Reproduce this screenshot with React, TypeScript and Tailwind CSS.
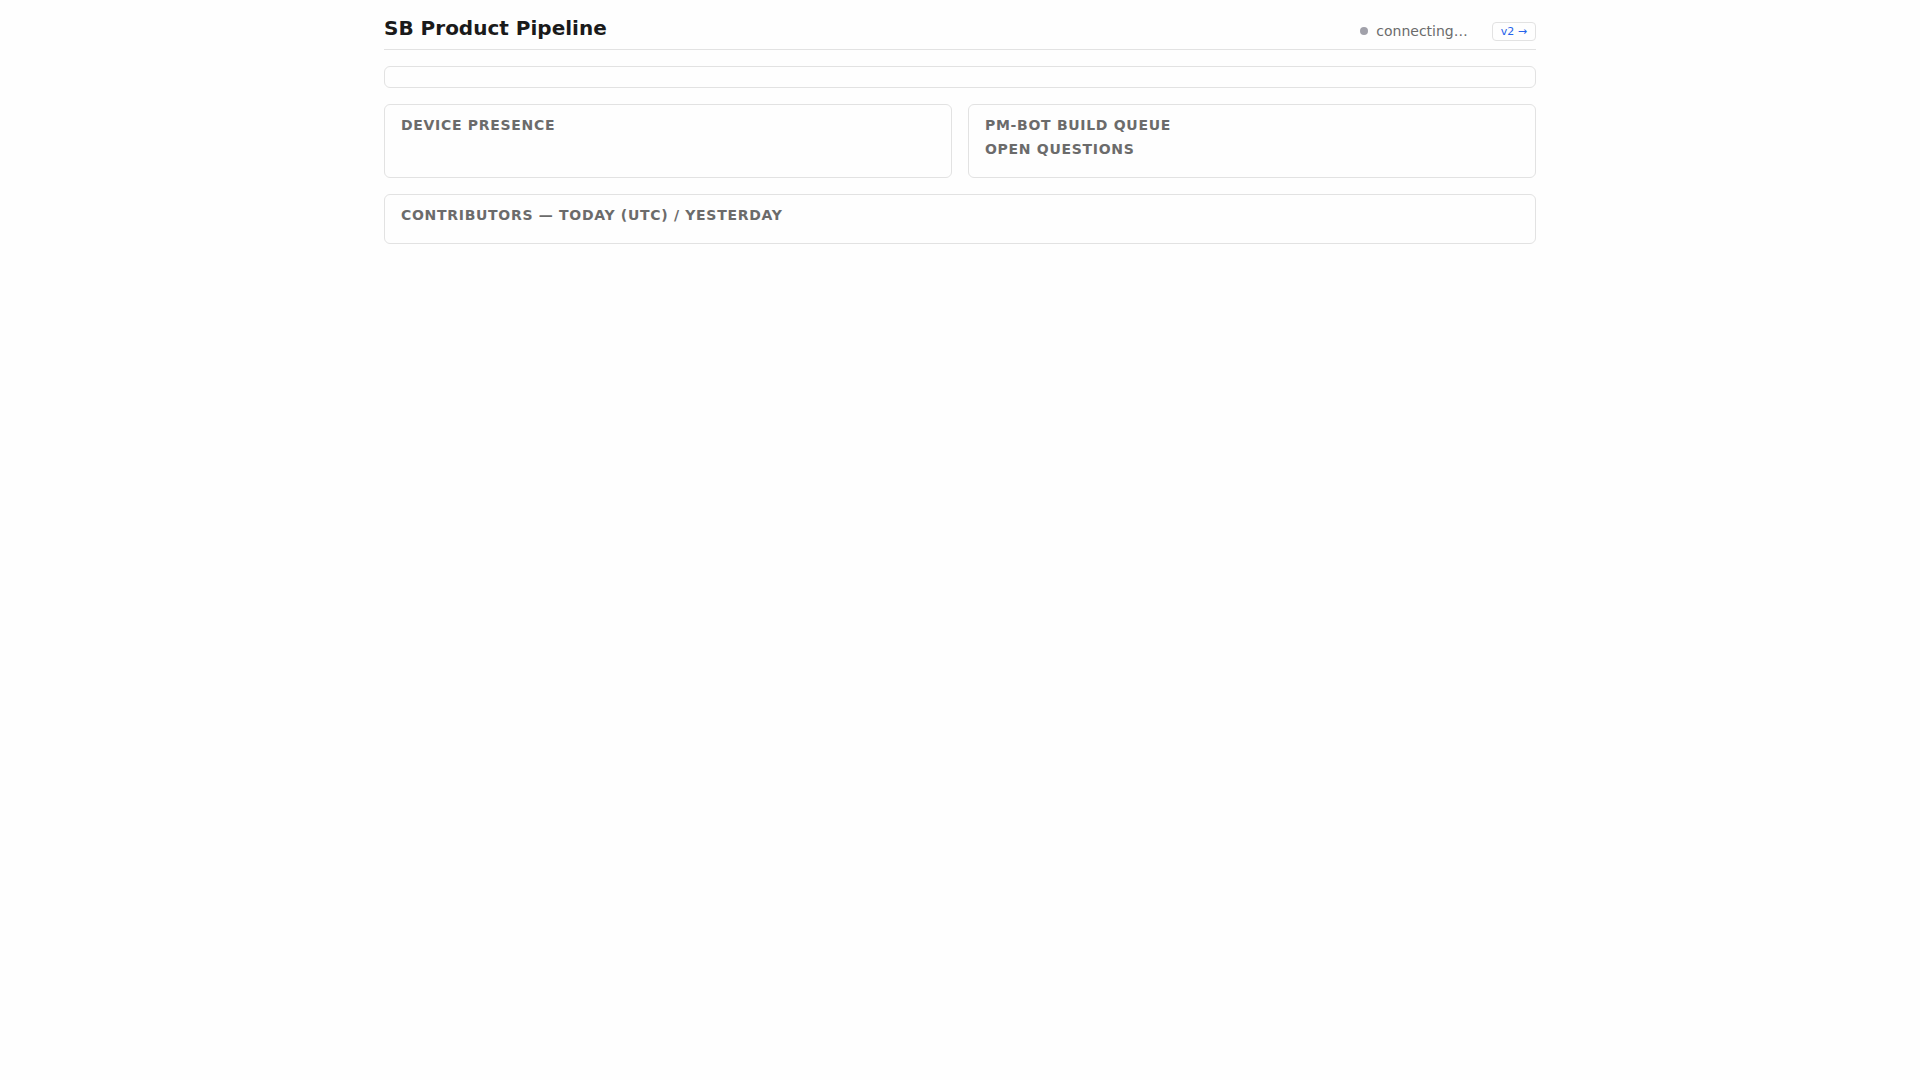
import React from "react";

const HEADING =
  "mb-2 text-[14px] leading-4 font-semibold uppercase tracking-[0.05em] text-[#6b6b6b]";

const CARD = "rounded-md border border-[#e2e2e2] px-4 py-3";

function Header() {
  return (
    <header className="flex items-end justify-between border-b border-[#e2e2e2] pb-2">
      <h1 className="text-[20px] leading-[26px] font-semibold">SB Product Pipeline</h1>
      <div className="flex items-start gap-6">
        <div className="flex items-center gap-2 text-[14px] leading-[18px] text-[#6b6b6b]">
          <span className="h-2 w-2 rounded-full bg-[#a1a1aa]" />
          <span>connecting…</span>
        </div>
        <a
          href="#v2"
          className="rounded-sm border border-[#e2e2e2] px-2 text-[11px] leading-[17px] text-[#2563eb]"
        >
          v2 →
        </a>
      </div>
    </header>
  );
}

export default function App() {
  return (
    <div className="min-h-screen bg-[#fefefe] font-['DejaVu_Sans',sans-serif] text-[#1a1a1a]">
      <main className="mx-auto flex max-w-[1200px] flex-col gap-4 px-6 pt-[15px]">
        <Header />

        {/* === Summary strip === */}
        <section className="h-[22px] rounded-md border border-[#e2e2e2]" />

        {/* === Presence and queue === */}
        <div className="grid grid-cols-2 gap-4">
          <section className={CARD}>
            <h2 className={HEADING}>Device presence</h2>
          </section>
          <section className={CARD}>
            <h2 className={HEADING}>PM-Bot build queue</h2>
            <h2 className={HEADING}>Open questions</h2>
          </section>
        </div>

        {/* === Contributors === */}
        <section className={CARD}>
          <h2 className={HEADING}>Contributors — today (UTC) / yesterday</h2>
        </section>
      </main>
    </div>
  );
}
